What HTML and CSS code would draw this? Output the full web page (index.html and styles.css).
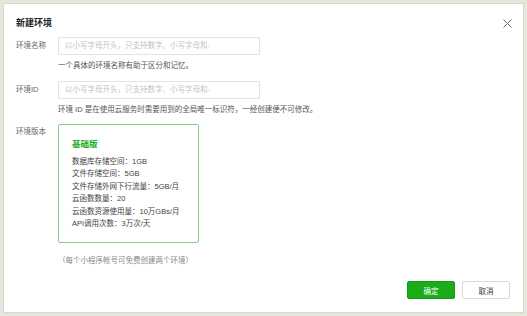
FILE: index.html
```html
<!DOCTYPE html>
<html lang="zh-CN">
<head>
<meta charset="utf-8">
<title>新建环境</title>
<link rel="stylesheet" href="styles.css">
</head>
<body>
<div class="dialog">
  <div class="header">
    <div class="title">新建环境</div>
    <svg class="close" width="9" height="9" viewBox="0 0 9 9"><path d="M0.5 0.5L8.5 8.5M8.5 0.5L0.5 8.5" stroke="#666" stroke-width="1" fill="none"/></svg>
  </div>
  <div class="form">
    <div class="row">
      <div class="label">环境名称</div>
      <div class="field">
        <div class="input">以小写字母开头，只支持数字、小写字母和-</div>
        <div class="help">一个具体的环境名称有助于区分和记忆。</div>
      </div>
    </div>
    <div class="row row-2">
      <div class="label">环境ID</div>
      <div class="field">
        <div class="input">以小写字母开头，只支持数字、小写字母和-</div>
        <div class="help">环境 ID 是在使用云服务时需要用到的全局唯一标识符，一经创建便不可修改。</div>
      </div>
    </div>
    <div class="row row-3">
      <div class="label label-top">环境版本</div>
      <div class="field">
        <div class="card">
          <div class="card-title">基础版</div>
          <ul class="specs">
            <li>数据库存储空间：1GB</li>
            <li>文件存储空间：5GB</li>
            <li>文件存储外网下行流量：5GB/月</li>
            <li>云函数数量：20</li>
            <li>云函数资源使用量：10万GBs/月</li>
            <li>API调用次数：3万次/天</li>
          </ul>
        </div>
        <div class="note">（每个小程序帐号可免费创建两个环境）</div>
      </div>
    </div>
  </div>
  <div class="footer">
    <button class="btn btn-primary">确定</button>
    <button class="btn btn-default">取消</button>
  </div>
</div>
</body>
</html>
```

FILE: styles.css
```css
* { box-sizing: border-box; }
html, body { margin: 0; padding: 0; }
body {
  width: 527px;
  height: 316px;
  padding: 3px;
  background: #e6e6dc;
  font-family: "Liberation Sans", "Noto Sans CJK SC", sans-serif;
  font-size: 7.5px;
  color: #555;
  overflow: hidden;
}
.dialog {
  width: 521px;
  height: 310px;
  background: #fff;
  border: 1px solid #d9d9cd;
  display: flex;
  flex-direction: column;
}
.header {
  display: flex;
  justify-content: space-between;
  align-items: center;
  padding: 13px 11px 0 12px;
  height: 25px;
}
.title {
  font-size: 9px;
  line-height: 12px;
  font-weight: bold;
  color: #222;
}
.close { display: block; }
.form {
  padding: 8px 0 0 12px;
}
.row {
  display: grid;
  grid-template-columns: 42px 1fr;
}
.row-2 { margin-top: 9px; }
.row-3 { margin-top: 8px; }
.label {
  line-height: 18px;
  color: #666;
}
.label-top {
  line-height: 12px;
  padding-top: 2px;
}
.input {
  width: 202px;
  height: 18px;
  border: 1px solid #e3e3e3;
  border-radius: 1px;
  padding-left: 6px;
  line-height: 16px;
  color: #c4c4c4;
}
.help {
  margin-top: 5px;
  line-height: 12px;
  color: #555;
}
.card {
  width: 141px;
  height: 119px;
  border: 1px solid #86cc86;
  border-radius: 2px;
  padding: 13px 0 0 13px;
}
.card-title {
  font-size: 8.5px;
  font-weight: bold;
  line-height: 12px;
  color: #1aad19;
}
.specs {
  list-style: none;
  margin: 6px 0 0 0;
  padding: 0;
}
.specs li {
  line-height: 12.4px;
  color: #444;
}
.note {
  margin-top: 12px;
  line-height: 12px;
  color: #888;
}
.footer {
  margin-top: auto;
  display: flex;
  justify-content: flex-end;
  gap: 7px;
  padding: 0 13px 13px 0;
}
.btn {
  width: 48px;
  height: 18px;
  border-radius: 2px;
  font-family: inherit;
  font-size: 7.5px;
  padding: 0;
  cursor: pointer;
}
.btn-primary {
  background: #1aad19;
  border: 1px solid #179b16;
  color: #fff;
}
.btn-default {
  background: #fff;
  border: 1px solid #d9d9d9;
  color: #353535;
}
```
